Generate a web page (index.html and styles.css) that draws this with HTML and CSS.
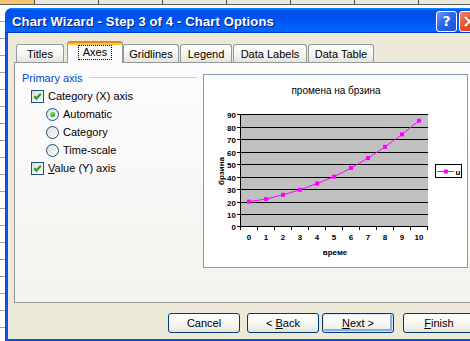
FILE: index.html
```html
<!DOCTYPE html>
<html>
<head>
<meta charset="utf-8">
<link rel="stylesheet" href="styles.css">
</head>
<body>
<div class="colheads">
  <span class="ch ch-sel"></span><span class="ch"></span><span class="ch"></span><span class="ch"></span><span class="ch"></span><span class="ch"></span><span class="ch"></span><span class="ch"></span>
</div>

<div class="window">
  <div class="titlebar">
    <span class="title">Chart Wizard - Step 3 of 4 - Chart Options</span>
    <span class="tb-btn tb-help">?</span>
    <span class="tb-btn tb-close"><svg width="21" height="21" viewBox="0 0 21 21"><path d="M6 6L15 15M15 6L6 15" stroke="#fff" stroke-width="2"/></svg></span>
  </div>
  <div class="client">
    <div class="tabs">
      <div class="tab t-titles">Titles</div>
      <div class="tab tab-sel"><span class="focus">Axes</span></div>
      <div class="tab t-grid">Gridlines</div>
      <div class="tab t-legend">Legend</div>
      <div class="tab t-labels">Data Labels</div>
      <div class="tab t-table">Data Table</div>
    </div>
    <div class="panel">
      <div class="left">
        <div class="group-head"><span class="group-title">Primary axis</span><span class="rule"></span></div>
        <div class="row"><span class="cb"><svg width="11" height="11" viewBox="0 0 11 11"><path d="M2.2 5.2L4.4 7.6L8.8 2.8" fill="none" stroke="#21A121" stroke-width="2.2"/></svg></span><span class="lbl">Category (X) axis</span></div>
        <div class="row sub"><span class="rb rb-on"></span><span class="lbl">Automatic</span></div>
        <div class="row sub"><span class="rb"></span><span class="lbl">Category</span></div>
        <div class="row sub"><span class="rb"></span><span class="lbl">Time-scale</span></div>
        <div class="row"><span class="cb"><svg width="11" height="11" viewBox="0 0 11 11"><path d="M2.2 5.2L4.4 7.6L8.8 2.8" fill="none" stroke="#21A121" stroke-width="2.2"/></svg></span><span class="lbl"><u>V</u>alue (Y) axis</span></div>
      </div>
      <svg class="chart" width="265" height="194" viewBox="0 0 265 194">
        <rect x="0.5" y="0.5" width="264" height="193" fill="#fff" stroke="#7F9DB9"/>
        <text x="133" y="19.5" class="c-title" text-anchor="middle">промена на брзина</text>
        <rect x="38" y="40.5" width="187" height="112" fill="#C0C0C0"/>
        <path class="crisp" stroke="#000" fill="none" d="M38 40.5H225M38 53.5H225M38 65.5H225M38 78.5H225M38 90.5H225M38 103.5H225M38 115.5H225M38 128.5H225M38 140.5H225M34 152.5H225M37.5 40V153M34 40.5H38M34 53.5H38M34 65.5H38M34 78.5H38M34 90.5H38M34 103.5H38M34 115.5H38M34 128.5H38M34 140.5H38M37.5 153V156M54.5 153V156M71.5 153V156M88.5 153V156M105.5 153V156M122.5 153V156M139.5 153V156M156.5 153V156M173.5 153V156M190.5 153V156M207.5 153V156M224.5 153V156"/>
        <g class="c-ax" text-anchor="end">
          <text x="33" y="43.5">90</text>
          <text x="33" y="56.5">80</text>
          <text x="33" y="68.5">70</text>
          <text x="33" y="81.5">60</text>
          <text x="33" y="93.5">50</text>
          <text x="33" y="106.5">40</text>
          <text x="33" y="118.5">30</text>
          <text x="33" y="131.5">20</text>
          <text x="33" y="143.5">10</text>
          <text x="33" y="155.5">0</text>
        </g>
        <g class="c-ax" text-anchor="middle">
          <text x="46" y="166">0</text>
          <text x="63" y="166">1</text>
          <text x="80" y="166">2</text>
          <text x="97" y="166">3</text>
          <text x="114" y="166">4</text>
          <text x="131" y="166">5</text>
          <text x="148" y="166">6</text>
          <text x="165" y="166">7</text>
          <text x="182" y="166">8</text>
          <text x="199" y="166">9</text>
          <text x="216" y="166">10</text>
        </g>
        <text x="132" y="181" class="c-ax" text-anchor="middle">време</text>
        <text class="c-ax" text-anchor="middle" transform="translate(20.5 97) rotate(-90)">брзина</text>
        <polyline fill="none" stroke="#FF00FF" stroke-width="1" points="46,127.6 63,125.1 80,120.8 97,115.8 114,109.6 131,102.7 148,94 165,84.1 182,72.9 199,60.4 216,46.7"/>
        <g fill="#FF00FF">
          <rect x="44" y="125.6" width="4" height="4"/>
          <rect x="61" y="123.1" width="4" height="4"/>
          <rect x="78" y="118.8" width="4" height="4"/>
          <rect x="95" y="113.8" width="4" height="4"/>
          <rect x="112" y="107.6" width="4" height="4"/>
          <rect x="129" y="100.7" width="4" height="4"/>
          <rect x="146" y="92" width="4" height="4"/>
          <rect x="163" y="82.1" width="4" height="4"/>
          <rect x="180" y="70.9" width="4" height="4"/>
          <rect x="197" y="58.4" width="4" height="4"/>
          <rect x="214" y="44.7" width="4" height="4"/>
        </g>
        <rect x="232.5" y="90.5" width="26" height="13" fill="#fff" stroke="#000" class="crisp"/>
        <path d="M234 97.5H251" stroke="#FF00FF" class="crisp"/>
        <rect x="241" y="95.5" width="4" height="4" fill="#FF00FF"/>
        <text x="252.5" y="100.5" class="c-ax">u</text>
      </svg>
    </div>
    <div class="buttons">
      <span class="btn b-cancel"><span>Cancel</span></span>
      <span class="btn b-back"><span>&lt; <u>B</u>ack</span></span>
      <span class="btn b-next btn-default"><span><u>N</u>ext &gt;</span></span>
      <span class="btn b-finish"><span><u>F</u>inish</span></span>
    </div>
  </div>
</div>
</body>
</html>
```
FILE: styles.css
```css
html, body {
  margin: 0;
  padding: 0;
  overflow: hidden;
}

body {
  width: 470px;
  height: 341px;
  position: relative;
  font-family: "Liberation Sans", Arial, sans-serif;
  font-size: 11px;
  color: #000;
  background:
    repeating-linear-gradient(to bottom, transparent 0 16px, #A0A0A0 16px 17px) 0 5px / 100% 100% repeat,
    #fff;
}

/* spreadsheet column headers peeking above the dialog */
.colheads {
  display: flex;
  height: 4px;
  border-bottom: 1px solid #5E5E5E;
  background: #fff;
}
.ch {
  flex: none;
  width: 63px;
  height: 4px;
  background: #E9E7DC;
  border-right: 1px solid #4A4A4A;
}
.ch-sel {
  width: 34px;
  background: #F6C46C;
}

/* dialog window */
.window {
  position: absolute;
  left: 5px;
  top: 8px;
  width: 485px;
  height: 334px;
  display: flex;
  flex-direction: column;
  background: #0A52E6;
  border-radius: 7px 7px 0 0;
}

.titlebar {
  flex: none;
  height: 25px;
  display: flex;
  align-items: center;
  padding: 0 10px 0 7px;
  border-radius: 7px 7px 0 0;
  background: linear-gradient(180deg, #0997FF, #0053EE 8%, #0050EE 40%, #0066FF 88%, #0066FF 93%, #005BFF 95%, #003DD7 96%, #003DD7);
}
.title {
  flex: 1;
  color: #fff;
  font-weight: bold;
  font-size: 13px;
  letter-spacing: 0.15px;
  padding-top: 1px;
  text-shadow: 1px 1px 0 #0A1E7A;
  white-space: nowrap;
}
.tb-btn {
  flex: none;
  width: 21px;
  height: 21px;
  box-sizing: border-box;
  border: 1px solid #fff;
  border-radius: 3px;
  display: flex;
  align-items: center;
  justify-content: center;
  color: #fff;
  font-weight: bold;
  font-size: 15px;
  margin-top: 1px;
}
.tb-help {
  margin-right: 2px;
  background: linear-gradient(135deg, #6C9BF8, #2D67E8 45%, #1C50D8);
  font-family: "DejaVu Sans", sans-serif;
  font-size: 14px;
}
.tb-close {
  background: linear-gradient(135deg, #F08A6A, #E1542E 45%, #C8421E);
}
.tb-close svg {
  display: block;
  flex: none;
}

.client {
  flex: 1;
  margin: 0 3px 3px;
  background: #ECE9D8;
  display: flex;
  flex-direction: column;
  padding-top: 8px;
  min-height: 0;
}

/* tabs */
.tabs {
  flex: none;
  height: 21px;
  display: flex;
  align-items: flex-end;
  padding-left: 8px;
  position: relative;
  z-index: 1;
}
.tab {
  flex: none;
  box-sizing: border-box;
  height: 18px;
  border: 1px solid #919B9C;
  border-bottom: none;
  border-radius: 3px 3px 0 0;
  background: linear-gradient(#FFFFFF, #F4F3EE 60%, #E6E4DA);
  display: flex;
  align-items: center;
  justify-content: center;
  margin-right: 1px;
  white-space: nowrap;
}
.t-titles { width: 48px; margin-right: 3px; }
.t-grid { width: 56px; }
.t-legend { width: 52px; }
.t-labels { width: 74px; }
.t-table { width: 66px; }
.tab-sel {
  width: 56px;
  height: 22px;
  margin-right: 0;
  margin-bottom: -1px;
  align-items: flex-start;
  padding-top: 3px;
  border-color: #919B9C;
  background: linear-gradient(#E68B2C 0 1px, #FFC73C 1px 3px, #FCFCFE 3px);
}
.focus {
  border: 1px dotted #000;
  padding: 0 4px;
  line-height: 13px;
}

/* tab page */
.panel {
  flex: none;
  box-sizing: border-box;
  height: 241px;
  margin: 0 6px;
  border: 1px solid #919B9C;
  background: linear-gradient(#FCFCFE, #F4F3EE);
  display: flex;
  align-items: flex-start;
  gap: 6px;
  padding: 8px 0 0 7px;
}

.left {
  flex: none;
  width: 175px;
  display: flex;
  flex-direction: column;
}
.group-head {
  height: 13px;
  display: flex;
  align-items: center;
  margin-bottom: 3px;
}
.group-title {
  color: #0046D5;
}
.rule {
  flex: 1;
  height: 1px;
  margin-left: 6px;
  background: #D0D0BF;
}
.row {
  height: 18px;
  display: flex;
  align-items: center;
  padding-left: 9px;
}
.row.sub {
  padding-left: 24px;
}
.lbl {
  margin-left: 4px;
  white-space: nowrap;
}
.cb {
  flex: none;
  width: 13px;
  height: 13px;
  box-sizing: border-box;
  border: 1px solid #1C5180;
  background: linear-gradient(135deg, #DCDCD7, #FFFFFF);
  display: flex;
  align-items: center;
  justify-content: center;
}
.cb svg { display: block; }
.rb {
  flex: none;
  width: 13px;
  height: 13px;
  box-sizing: border-box;
  border: 1px solid #1C5180;
  border-radius: 50%;
  background: linear-gradient(135deg, #DCDCD7, #FFFFFF);
  display: flex;
  align-items: center;
  justify-content: center;
}
.rb-on::after {
  content: "";
  width: 5px;
  height: 5px;
  border-radius: 50%;
  background: radial-gradient(circle at 35% 35%, #8DE48A, #21A121 70%);
}

.chart {
  flex: none;
  display: block;
  margin-top: 3px;
}
.crisp { shape-rendering: crispEdges; }
.c-title {
  font-family: "Liberation Sans", Arial, sans-serif;
  font-size: 10px;
  fill: #000;
}
.c-ax {
  font-family: "Liberation Sans", Arial, sans-serif;
  font-size: 8px;
  font-weight: bold;
  fill: #000;
}

/* buttons */
.buttons {
  flex: none;
  display: flex;
  height: 20px;
  margin-top: 10px;
  padding-left: 160px;
}
.btn {
  flex: none;
  box-sizing: border-box;
  width: 72px;
  height: 20px;
  border: 1px solid #003C74;
  border-radius: 3px;
  background: linear-gradient(#FFFFFF, #F3F3EE 70%, #E3E0D5);
  display: flex;
  align-items: center;
  justify-content: center;
  white-space: nowrap;
}
.b-cancel { margin-right: 7px; }
.b-back { margin-right: 3px; }
.b-next { margin-right: 9px; }
.btn-default {
  box-shadow: inset 0 0 0 1px #CEE7FF, inset -1px -1px 0 2px #89ADE4;
}
```
